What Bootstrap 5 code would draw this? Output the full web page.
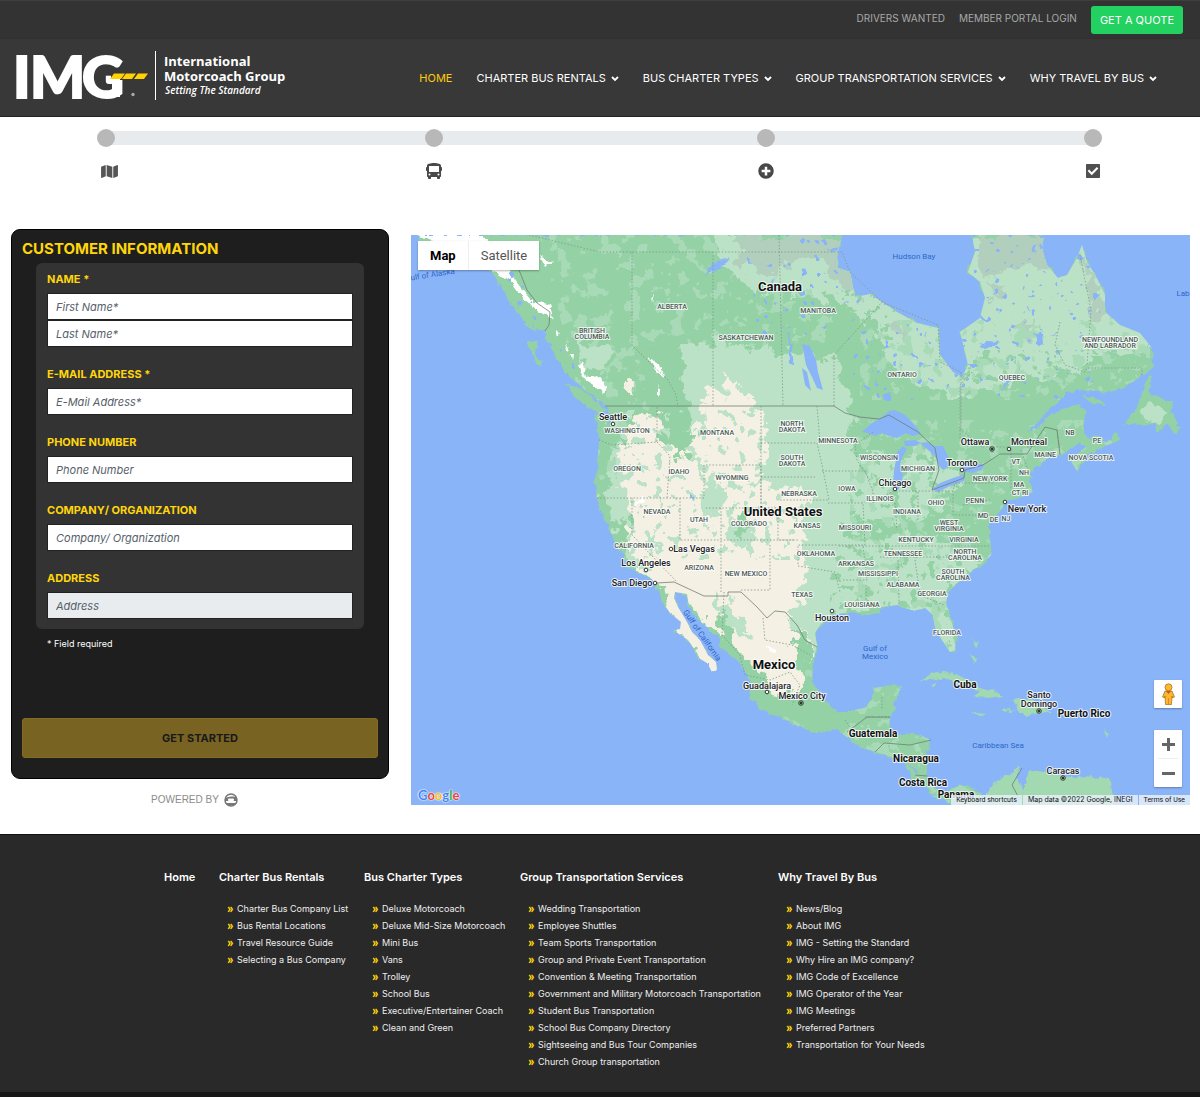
<!DOCTYPE html>
<html lang="en">
<head>
<meta charset="utf-8">
<meta name="viewport" content="width=device-width, initial-scale=1">
<title>International Motorcoach Group – Get a Quote</title>
<link href="https://cdn.jsdelivr.net/npm/bootstrap@5.3.0/dist/css/bootstrap.min.css" rel="stylesheet">
<style>
body{font-family:Inter,"Liberation Sans",sans-serif;font-size:12px;color:#222;background:#fff}
a{text-decoration:none}
.topbar{background:#333;height:38px;padding:0 17px 2px;gap:14px;font-size:10px;border-top:1px solid #3e3e3e}
.topbar a{color:#a9a9a9}
.topbar .btn-quote{background:#22d160;color:#fff;font-size:11px;line-height:16px;padding:6px 9px;border:0;border-radius:3px;margin-top:2px}
.mainbar{background:#383838;height:79px;padding:2px 43px 0 12px;border-top:1px solid #303030;border-bottom:1px solid #242424}
.mainbar .brand svg{display:block}
.menu{gap:24px;font-size:11px}
.menu a{color:#fff}
.menu a.active{color:#ffcb08}
.menu svg{margin-left:5px}
.steps{display:grid;grid-template-columns:18px 310fr 18px 315fr 18px 309fr 18px;padding:12px 98px 0 97px;align-items:center;row-gap:16px}
.steps .dot{width:18px;height:18px;border-radius:50%;background:#b8b8b8;z-index:1}
.steps .seg{height:14px;background:#e7ebee;margin:0 -3px}
.steps svg{display:block}
.workarea{padding:50px 10px 0 11px;gap:22px}
.formcol{flex:0 0 378px}
.quote{background:#1e1e1e;border:1px solid #000;border-radius:9px;padding:10px}
.quote h1{font-size:15px;line-height:18px;font-weight:700;color:#ffd60a;margin:0}
.panel{background:#333;border-radius:6px;margin:5px 14px 0;padding:9px 11px 10px}
.panel label{display:block;color:#ffd60a;font-weight:700;font-size:11px;line-height:14px;margin-bottom:7px}
.panel .form-control{font-size:11px;line-height:16px;height:27px;padding:4px 8px;border:1px solid #222;border-radius:0;font-style:italic;background:#fff}
.panel .form-control::placeholder{color:#56606a;opacity:1}
.panel .form-control:disabled{background:#e8ecef}
.panel .group + .group{margin-top:20px}
.required{color:#fff;font-size:9px;line-height:14px;margin:8px 25px 67px}
.btn-start{background:#786323;border:1px solid #846c20;border-radius:3px;color:#191919;font-weight:700;font-size:11px;line-height:18px;padding:10px;margin-bottom:10px;width:100%}
.btn-start:hover{background:#846c20;color:#111}
.powered{color:#8b8b8b;font-size:10px;line-height:16px;font-family:"Liberation Sans",sans-serif;margin-top:13px;gap:5px;padding-right:11px}
.mapbox{position:relative;margin-top:6px;align-self:flex-start;flex:1 1 0;min-width:0;font-family:Roboto,sans-serif}
.mapbox > svg{display:block;width:100%;height:auto}
.maptype{position:absolute;left:7px;top:6px;background:#fff;box-shadow:0 1px 2px rgba(0,0,0,.3);font-size:13px}
.maptype button{background:none;border:0;color:#555;padding:0 12px;height:29px}
.maptype button.on{color:#000;font-weight:700;border-right:1px solid #eee}
.mapctl{position:absolute;right:8px;bottom:18px;gap:22px}
.mapctl .tile{background:#fff;width:28px;border-radius:1px;box-shadow:0 1px 2px rgba(0,0,0,.3)}
.mapctl button{display:flex;align-items:center;justify-content:center;width:28px;height:28px;border:0;background:none;padding:0}
.mapctl hr{margin:0 4px;border-color:#bbb;height:0}
.credits{position:absolute;right:0;bottom:0;font-size:7px;line-height:10px;gap:1px}
.credits > *{background:rgba(230,238,248,.85);color:#111;padding:0 5px}
.credits span{font-family:Inter,sans-serif}
.googlemark{position:absolute;left:7px;bottom:0;font-size:13px;line-height:20px;font-family:Lato,sans-serif;font-weight:700;text-shadow:0 0 1px #fff,0 0 1px #fff,0 0 2px #fff}
.st{font-size:7px;font-weight:500;fill:#4c5a55}
.ct{font-size:9px;font-weight:500;fill:#202124}
.co{font-size:10px;font-weight:700;fill:#111}
.big{font-size:13px;font-weight:700;fill:#111}
.st,.ct,.co,.big{paint-order:stroke;stroke:#fff;stroke-opacity:.8;stroke-width:2px;stroke-linejoin:round;text-anchor:middle}
.sea{font-size:8px;fill:#2c67c9;text-anchor:middle}
.footer{background:#292929;margin-top:26px;border-top:1px solid #111;border-bottom:5px solid #161616;padding:34px 164px 22px;color:#fff}
.footer h2{font-size:11px;line-height:17px;font-weight:600;margin:0 0 14px}
.footer ul{list-style:none;margin:0;padding:0 0 0 8px;font-size:9px;line-height:17px;white-space:nowrap}
.footer li{display:flex;align-items:center;gap:3px;height:17px}
.footer li::before{content:"»";color:#ffd60a;font-family:Lato,sans-serif;font-weight:900;font-size:14px;line-height:14px;width:7px;padding-bottom:2px}
.footer a{color:#eee}
.f1{flex:0 0 55px}.f2{flex:0 0 145px}.f3{flex:0 0 156px}.f4{flex:0 0 258px}
</style>
<script src="https://cdn.jsdelivr.net/npm/bootstrap@5.3.0/dist/js/bootstrap.bundle.min.js"></script>
</head>
<body>
<header>
  <div class="topbar d-flex justify-content-end align-items-center">
    <a href="#">DRIVERS WANTED</a><a href="#">MEMBER PORTAL LOGIN</a>
    <a class="btn btn-quote" href="#">GET A QUOTE</a>
  </div>
  <nav class="mainbar d-flex justify-content-between align-items-center" aria-label="Main">
    <a class="brand" href="#" aria-label="IMG home">
      <svg width="280" height="74" viewBox="12 42 280 74" fill="#fff">
        <text y="98" font-family="Lato" font-weight="900" font-size="58" stroke="#fff" stroke-width="2"><tspan x="13">I</tspan><tspan x="30">M</tspan><tspan x="82">G</tspan></text>
        <path d="M111 72h39l-5 8h-25v-1h-9z" fill="#383838"/>
        <path d="M112 79h8v18h-8z"/>
        <path d="M114 73.500h11l-4 5.500h-11zM126 73.500h10l-4 5.500h-10zM138 73.500h10l-4 5.500h-10z" fill="#ffd200"/>
        <circle cx="133" cy="94.500" r="1.700" fill="#aaa"/><path d="M155 51h1v49h-1z"/>
        <g font-family="Open Sans" font-weight="700"><text x="164" y="66" font-size="13">International</text><text x="164" y="81" font-size="13">Motorcoach Group</text><text x="165" y="94" font-size="10" font-weight="600" font-style="italic">Setting The Standard</text></g>
      </svg>
    </a>
    <div class="menu d-flex">
      <a class="active" href="#">HOME</a>
      <a href="#">CHARTER BUS RENTALS<svg width="8" height="6" viewBox="0 0 8 6"><path d="M1 1l3 3 3-3" fill="none" stroke="#fff" stroke-width="1.800"/></svg></a>
      <a href="#">BUS CHARTER TYPES<svg width="8" height="6" viewBox="0 0 8 6"><path d="M1 1l3 3 3-3" fill="none" stroke="#fff" stroke-width="1.800"/></svg></a>
      <a href="#">GROUP TRANSPORTATION SERVICES<svg width="8" height="6" viewBox="0 0 8 6"><path d="M1 1l3 3 3-3" fill="none" stroke="#fff" stroke-width="1.800"/></svg></a>
      <a href="#">WHY TRAVEL BY BUS<svg width="8" height="6" viewBox="0 0 8 6"><path d="M1 1l3 3 3-3" fill="none" stroke="#fff" stroke-width="1.800"/></svg></a>
    </div>
  </nav>
</header>
<main>
  <div class="steps">
    <span class="dot"></span><span class="seg"></span><span class="dot"></span><span class="seg"></span><span class="dot"></span><span class="seg"></span><span class="dot"></span>
    <svg class="ms-1" width="17" height="15" viewBox="0 0 576 512" fill="#555"><path d="M0 118v346c0 11 11 19 22 15l138-63V32L20 88C8 93 0 105 0 118zm192 298 192 64V96L192 32zM554 33 416 96v384l140-56c12-5 20-17 20-30V48c0-11-11-19-22-15z"/></svg>
    <span></span>
    <svg width="18" height="16" viewBox="-32 0 576 512" fill="#484848"><path fill-rule="evenodd" d="M488 128h-8V80c0-45-100-80-224-80S32 35 32 80v48h-8c-13 0-24 11-24 24v80c0 13 11 24 24 24h8v160c0 18 14 32 32 32v32c0 18 14 32 32 32h32c18 0 32-14 32-32v-32h192v32c0 18 14 32 32 32h32c18 0 32-14 32-32v-32c18 0 32-14 32-32V256h8c13 0 24-11 24-24v-80c0-13-11-24-24-24zM96 96h320v192H96zm16 304a32 32 0 1 1 0-64 32 32 0 0 1 0 64zm288 0a32 32 0 1 1 0-64 32 32 0 0 1 0 64z"/></svg>
    <span></span>
    <svg width="18" height="16" viewBox="-32 0 576 512" fill="#484848"><path fill-rule="evenodd" d="M256 8a248 248 0 1 0 0 496 248 248 0 0 0 0-496zm-40 108h80v100h100v80H296v100h-80V296H116v-80h100z"/></svg>
    <span></span>
    <svg width="18" height="16" viewBox="-64 0 576 512" fill="#505050"><path fill-rule="evenodd" d="M32 32h384c18 0 32 14 32 32v384c0 18-14 32-32 32H32c-18 0-32-14-32-32V64c0-18 14-32 32-32zM184 389 396 177l-48-48-164 164-84-84-48 48z"/></svg>
  </div>
  <div class="workarea d-flex">
    <section class="formcol">
      <form class="quote">
        <h1>CUSTOMER INFORMATION</h1>
        <div class="panel">
          <div class="group"><label for="fn">NAME *</label><input id="fn" class="form-control" placeholder="First Name*"><input id="ln" aria-label="Last name" class="form-control" placeholder="Last Name*"></div>
          <div class="group"><label for="em">E-MAIL ADDRESS *</label><input id="em" type="email" class="form-control" placeholder="E-Mail Address*"></div>
          <div class="group"><label for="ph">PHONE NUMBER</label><input id="ph" type="tel" class="form-control" placeholder="Phone Number"></div>
          <div class="group"><label for="og">COMPANY/ ORGANIZATION</label><input id="og" class="form-control" placeholder="Company/ Organization"></div>
          <div class="group"><label for="ad">ADDRESS</label><input id="ad" class="form-control" placeholder="Address" disabled></div>
        </div>
        <p class="required">* Field required</p>
        <button class="btn btn-start" type="button">GET STARTED</button>
      </form>
      <div class="powered d-flex justify-content-center align-items-center">POWERED BY
        <svg width="14" height="14" viewBox="0 0 14 14"><circle cx="7" cy="7" r="6" fill="none" stroke="#777" stroke-width="1.500"/><path d="M1 6c3-3 9-3 12-1v3H1z" fill="#777"/><rect x="4" y="5.500" width="6" height="2.500" rx="1" fill="#fff"/><path d="M2 10h10l-2 2.500H4z" fill="#777"/></svg>
      </div>
    </section>
    <section class="mapbox">
      <svg viewBox="411 235 779 570" role="img" aria-label="Map of North America">
        <defs>
          <filter id="rough" x="-5%" y="-5%" width="110%" height="110%"><feTurbulence type="fractalNoise" baseFrequency=".14" numOctaves="3" seed="4" result="n"/><feDisplacementMap in="SourceGraphic" in2="n" scale="7" xChannelSelector="R" yChannelSelector="G"/></filter>
          <filter id="ragged" x="-10%" y="-10%" width="120%" height="120%"><feTurbulence type="fractalNoise" baseFrequency=".07" numOctaves="4" seed="9" result="n"/><feDisplacementMap in="SourceGraphic" in2="n" scale="30" xChannelSelector="R" yChannelSelector="G"/></filter>
          <filter id="mottle" x="0" y="0" width="100%" height="100%"><feTurbulence type="fractalNoise" baseFrequency=".07" numOctaves="4" seed="12"/><feColorMatrix values="0 0 0 0 0 0 0 0 0 0 0 0 0 0 0 30 0 0 0 -17.500" result="m"/><feComposite in="SourceGraphic" in2="m" operator="in"/></filter>
          <filter id="specks" x="0" y="0" width="100%" height="100%"><feTurbulence type="fractalNoise" baseFrequency=".11" numOctaves="3" seed="31"/><feColorMatrix values="0 0 0 0 0 0 0 0 0 0 0 0 0 0 0 0 30 0 0 -18.500" result="m"/><feComposite in="SourceGraphic" in2="m" operator="in"/></filter>
          <filter id="ponds" x="0" y="0" width="100%" height="100%"><feTurbulence type="fractalNoise" baseFrequency=".13" numOctaves="2" seed="77"/><feColorMatrix values="0 0 0 0 0 0 0 0 0 0 0 0 0 0 0 0 0 30 0 -21" result="m"/><feComposite in="SourceGraphic" in2="m" operator="in"/></filter>
          <path id="land" d="M416 235L425 247 445 250 470 262 488 270 493 276 503 290 508 300 515 308 522 320 532 328 545 333 549 345 558 362 567 375 580 385 590 395 602 403 608 412 603 418 594 413 598 430 599 440 598 460 595 480 597 500 601 512 610 530 615 543 622 555 628 567 640 573 652 579 657 590 664 604 670 613 681 622 680 629 673 630 682 636 688 640 695 650 697 657 707 663 712 672 717 670 716 662 708 655 700 640 692 632 687 622 678 607 674 598 675 592 687 594 689 607 695 617 707 627 718 637 720 648 730 653 740 663 748 675 751 683 749 697 755 703 767 713 780 717 800 727 817 732 837 730 847 737 858 747 877 752 892 757 900 760 907 767 910 773 913 780 927 787 932 797 942 798 950 805H985L983 795 973 788 960 785 947 791 937 788 930 783 927 777 927 767 928 753 931 740 920 735 910 733 897 735 889 728 890 717 895 707 895 697 902 687 893 685 875 688 871 700 867 707 847 712 837 712 825 702 817 690 812 680 813 663 817 645 815 633 820 625 832 615 850 612 867 615 878 613 880 607 897 605 913 611 925 608 933 615 935 627 942 640 950 652 955 650 956 637 950 617 946 603 948 592 960 580 973 570 987 562 992 553 990 540 988 527 997 515 1005 503 1017 498 1033 492 1030 482 1033 468 1047 460 1063 453 1079 443 1087 446 1070 460 1077 471 1087 455 1103 447 1120 440 1115 432 1107 442 1094 442 1083 432 1083 425 1087 412 1080 405 1067 407 1050 415 1033 428 1047 412 1067 393 1083 390 1110 392 1123 388 1143 375 1153 368 1152 348 1140 333 1120 325 1105 312 1105 295 1097 278 1087 262 1082 245 1077 258 1067 275 1058 278 1047 265 1042 248 1043 235H972L975 252 968 272 980 282 985 298 980 318 960 332 965 352 968 365 962 377 953 372 940 355 938 328 917 323 897 312 882 302 870 294 855 297 850 272 838 268 837 255 842 235Z"/>
          <clipPath id="onland"><use href="#land"/></clipPath>
        </defs>
        <rect x="411" y="235" width="779" height="570" fill="#8ab4f8"/>
        <use href="#land" fill="#94d2a5" filter="url(#rough)"/>
        <g clip-path="url(#onland)">
          <g fill="#a9dab7" filter="url(#mottle)"><path d="M540 235H835V345H640L660 480H600Z"/></g>
          <g fill="#bbe2c6" filter="url(#ragged)">
            <path d="M715 235H1130L1160 350 1090 355 1080 370 1010 380 985 392 965 400 920 385 890 365 870 325 835 300 800 295 760 290 722 262Z"/>
            <path d="M678 352L700 342 740 345 780 350 836 356 850 410 855 500 845 560 850 620 825 665 790 645 720 520 690 420Z"/>
            <path d="M840 460L925 450 965 475 945 510 860 530Z M830 540L925 535 990 560 940 610 850 610Z M740 600L765 650 735 650 705 590Z M620 440H640L655 500 610 530 605 500Z M580 345L605 350 612 368 585 370ZM925 605H955V655H940Z"/>
          </g>
          <g fill="#b2cfbd" filter="url(#ragged)"><path d="M735 235H855L862 300 840 285 815 260 790 262 770 275 740 265Z M975 235H1045L1052 272 1030 262 1010 268 980 280Z M1082 245L1110 320 1096 325 1088 290Z M1010 325L1035 320 1030 345ZM890 322L905 330 912 350 900 340ZM990 283L1005 290 995 302Z"/></g>
          <g fill="#a9dab7" filter="url(#mottle)"><path d="M850 420H1120V680H850ZM780 660H1000V805H780ZM720 290H840V345H720ZM860 320H1150V400H860Z"/></g>
          <g fill="#94d2a5" filter="url(#specks)"><path d="M720 290H900V340H720ZM960 350H1150V400H960Z M870 420H1120V780H830V560Z"/></g>
          <g fill="#f5f0e4" filter="url(#ragged)">
            <path d="M632 412L658 415 664 445 690 458 697 430 705 405 716 405 738 385 757 405 765 430 762 470 748 486 795 485 812 498 800 520 808 560 800 600 786 615 815 650 802 690 775 700 738 640 730 600 702 622 672 590 640 575 622 530 640 520 620 485 622 455Z"/>
            <path d="M660 583L676 585 683 610 722 668 708 674 670 610Z M698 397L712 390 730 402 712 407ZM722 375L732 378 738 390 724 394Z M618 378L638 382 630 398Z M688 592L730 600 748 650 720 640Z"/>
          </g>
          <g fill="#bbe2c6" filter="url(#ragged)"><path d="M703 500L713 470 722 500 708 530ZM725 520L752 520 757 535 738 555ZM650 530L660 545 655 560ZM710 590L735 605 750 640 730 630ZM690 455L705 462 700 475ZM775 505L800 508 790 518ZM614 540L628 548 648 570 635 570Z"/></g>
          <g fill="#bbe2c6" filter="url(#specks)"><path d="M610 410H800V560H610Z"/></g>
          <g fill="#94d2a5" filter="url(#ragged)"><path d="M664 408L680 418 690 450 680 462 672 440ZM737 510L750 515 745 540ZM722 605L735 640 750 670 762 700 745 690 720 650ZM790 620L812 650 806 690 798 660ZM760 700L812 690 840 712 838 730 790 722Z"/></g>
          <g fill="#fff" filter="url(#rough)"><path d="M411 235H482L500 255 515 280 530 300 550 305 555 320 535 310 518 292 510 280 490 270 470 250ZM579 365L583 363 587 377 598 375 606 386 603 393 595 386 585 380ZM648 358L653 361 660 365 661 370 666 374 662 378 655 370ZM555 330L560 333 557 337ZM566 342L569 350 567 352ZM570 354L574 354 573 360ZM658 385L661 392 658 397ZM540 255L552 262 546 268ZM652 297 655 294 653 302ZM633 505L643 495 644 500 636 506ZM765 644L777 650 772 653Z"/></g>
          <g fill="#8ab4f8" filter="url(#ponds)"><path d="M740 235H1100V400H850V340H760ZM488 270L520 270 600 400 560 380Z"/></g>
        </g>
        <g fill="#94d2a5" filter="url(#rough)">
          <path d="M526 340L537 341 535 353 542 366 536 363ZM564 383L580 388 596 402 607 412 597 412 580 402ZM500 280L512 288 519 305 510 300ZM520 310L532 320 536 332 525 325Z"/>
          <path d="M1148 376L1154 375 1148 392 1160 398 1172 403 1171 412 1179 428 1174 434 1168 424 1157 432 1154 423 1125 424 1138 404ZM1083 396L1097 398 1105 405 1092 404ZM1090 437L1100 436 1104 441 1096 441Z"/>
          <path fill="#bbe2c6" d="M1140 410L1150 402 1168 412 1160 424 1145 420Z"/>
          <path fill="#a3d9b1" d="M920 682L930 673 945 671 962 677 978 686 993 691 1004 697 988 699 975 696 980 691 958 683 940 678ZM1012 700L1022 698 1033 700 1052 712 1038 713 1026 717 1018 710 1003 712 1004 709 1018 710ZM971 711L987 714 979 717ZM1058 711H1070L1068 716 1058 714ZM930 683L936 683 935 686ZM968 639L980 643 977 647 973 641ZM1104 728L1108 735 1107 738ZM1110 742L1112 751ZM970 653L976 660 974 665Z"/>
          <path fill="#a3d9b1" d="M950 805L985 797 995 782 1015 770 1022 767 1015 776 1019 786 1030 770 1050 773 1070 777 1110 778 1112 785 1115 805Z"/>
        </g>
        <g fill="#8ab4f8">
          <path d="M862 432L872 423 881 418 889 411 895 410 905 415 912 422 918 429 921 434 912 436 906 433 897 438 889 436 882 433 875 436 868 433Z"/>
          <path d="M897 452L903 446 907 449 903 456 900 464 903 474 902 484 898 490 893 486 894 470 896 460Z"/>
          <path d="M920 443L927 442 934 446 943 446 948 456 950 466 943 470 939 466 935 456 928 450ZM904 441L915 440 921 443 914 446 905 446Z"/>
          <path d="M932 489L940 483 953 478 965 474 964 481 950 486 938 492ZM960 471L966 464 984 464 982 470 972 473Z"/>
          <path d="M802 344L810 346 816 360 818 372 823 390 817 388 812 377 806 365ZM802 368L807 372 811 391 805 385Z"/>
        </g>
        <g fill="#8ab4f8" filter="url(#rough)">
          <path d="M1027 432L1038 424 1048 412 1042 426ZM731 258L716 270 705 275 712 264 722 260ZM776 275L770 290 772 282ZM787 330L792 350 794 366 789 362ZM884 393H890V401H885ZM1035 333H1043L1044 343 1037 345ZM690 492L695 495 694 502ZM978 345L988 341 1000 342 994 347 982 348Z"/>
          <path d="M1023 771L1027 783 1024 791 1021 784ZM908 764L920 772 917 773ZM605 402L612 418 608 422ZM875 378L879 386 876 385ZM1000 392L1006 380 1009 382ZM1038 244L1030 250 1033 252Z"/>
        </g>
        <g fill="none" stroke="#7d9588" stroke-width=".8" stroke-dasharray="1.500 1.800">
          <path d="M529 235L600 252H842L850 272 882 302 938 325 940 362 961 372V430L982 447 1009 447M632 252V345L645 358 668 380 676 395 678 407M713 252V406M779 235L783 406M834 406V355L883 301M599 440L612 445 657 442V406M657 442L670 456 667 498M597 498H704V465H761V508H704M632 498V535L677 582M680 498V540H798M721 508V592M770 545V590H741M761 406V508H778V540H795M761 443H817L822 465 829 500H778M761 477H815M817 406L820 443M828 503H863L865 545H798V566L835 572 840 592M839 546L868 546H990M843 580H867L863 545M822 471H865L873 492V503L893 491H953L955 483H995M873 432L855 445 857 460 870 480M918 492V520M895 503L897 530M880 557H955M898 560L899 603M915 560 920 595 944 605M866 585V600L878 605M953 491V515H990M963 505L990 500M1011 450V490M1021 450 1030 475M1027 447 1045 445M1057 430L1060 450M972 372L960 385V440L968 447M1060 322L1055 345 1065 365 1085 372 1087 368H1142V375M1080 255L1091 310 1087 365"/>
          <path d="M724 592L722 635 740 655 745 675 770 680 790 672 800 685 792 705M763 618L765 640 792 645 810 655M865 717H890M845 720 855 735M882 697V710"/>
        </g>
        <g fill="none" stroke="#6f7f77" stroke-width=".8"><path d="M605 406H834L845 413 860 417 879 419 889 415 918 432 935 448 939 470 932 490 964 478 965 470 983 465 1000 454H1027L1045 427 1057 430 1060 455M657 583 674 582 704 596H728V592H741L757 607 767 618 775 611 785 612 797 625 805 640 817 647M867 717H890M847 732 867 717M875 752 884 743 910 745 931 740M915 775 927 776M519 270 527 290 537 303 550 312 549 325 545 331M1022 768 1012 785 1020 800"/></g>
        <text class="big" x="780" y="291">Canada</text><text class="big" x="783" y="516">United States</text><text class="big" x="774" y="669">Mexico</text>
        <g class="st">
          <text x="672" y="309">ALBERTA</text><text x="818" y="313">MANITOBA</text><text x="746" y="340">SASKATCHEWAN</text><text x="592" y="333">BRITISH</text><text x="592" y="339">COLUMBIA</text><text x="902" y="377">ONTARIO</text><text x="1012" y="380">QUEBEC</text><text x="1110" y="342">NEWFOUNDLAND</text><text x="1110" y="348">AND LABRADOR</text>
          <text x="627" y="433">WASHINGTON</text><text x="717" y="435">MONTANA</text><text x="792" y="426">NORTH</text><text x="792" y="432">DAKOTA</text><text x="792" y="460">SOUTH</text><text x="792" y="466">DAKOTA</text><text x="627" y="471">OREGON</text><text x="679" y="474">IDAHO</text><text x="732" y="480">WYOMING</text><text x="838" y="443">MINNESOTA</text><text x="879" y="460">WISCONSIN</text><text x="918" y="471">MICHIGAN</text><text x="799" y="496">NEBRASKA</text><text x="847" y="491">IOWA</text><text x="880" y="501">ILLINOIS</text><text x="907" y="514">INDIANA</text><text x="936" y="505">OHIO</text><text x="975" y="503">PENN</text><text x="990" y="481">NEW YORK</text><text x="1045" y="457">MAINE</text><text x="1070" y="435">NB</text><text x="1097" y="443">PE</text><text x="1091" y="460">NOVA SCOTIA</text><text x="1016" y="464">VT</text><text x="1024" y="475">NH</text><text x="1019" y="487">MA</text><text x="1020" y="495">CT RI</text><text x="983" y="518">MD</text><text x="994" y="522">DE</text><text x="1006" y="521">NJ</text>
          <text x="657" y="514">NEVADA</text><text x="699" y="522">UTAH</text><text x="749" y="526">COLORADO</text><text x="807" y="528">KANSAS</text><text x="855" y="530">MISSOURI</text><text x="949" y="525">WEST</text><text x="949" y="531">VIRGINIA</text><text x="916" y="542">KENTUCKY</text><text x="964" y="542">VIRGINIA</text><text x="634" y="548">CALIFORNIA</text><text x="816" y="556">OKLAHOMA</text><text x="903" y="556">TENNESSEE</text><text x="965" y="554">NORTH</text><text x="965" y="560">CAROLINA</text><text x="699" y="570">ARIZONA</text><text x="746" y="576">NEW MEXICO</text><text x="856" y="566">ARKANSAS</text><text x="878" y="576">MISSISSIPPI</text><text x="953" y="574">SOUTH</text><text x="953" y="580">CAROLINA</text><text x="903" y="587">ALABAMA</text><text x="932" y="596">GEORGIA</text><text x="802" y="597">TEXAS</text><text x="862" y="607">LOUISIANA</text><text x="947" y="635">FLORIDA</text>
        </g>
        <g class="ct"><text x="613" y="420">Seattle</text><text x="975" y="445">Ottawa</text><text x="1029" y="445">Montreal</text><text x="962" y="466">Toronto</text><text x="895" y="486">Chicago</text><text x="1027" y="512">New York</text><text x="694" y="552">Las Vegas</text><text x="646" y="566">Los Angeles</text><text x="632" y="586">San Diego</text><text x="832" y="621">Houston</text><text x="767" y="689">Guadalajara</text><text x="802" y="699">Mexico City</text><text x="1039" y="698">Santo</text><text x="1039" y="707">Domingo</text><text x="1063" y="774">Caracas</text></g>
        <g class="co"><text x="965" y="688">Cuba</text><text x="1084" y="717">Puerto Rico</text><text x="873" y="737">Guatemala</text><text x="916" y="762">Nicaragua</text><text x="923" y="786">Costa Rica</text><text x="956" y="798">Panama</text></g>
        <g class="sea"><text x="914" y="259">Hudson Bay</text><text x="875" y="651">Gulf of</text><text x="875" y="659">Mexico</text><text x="998" y="748">Caribbean Sea</text><text x="1183" y="296">Lab</text><text x="433" y="277" transform="rotate(-9 433 277)">ulf of Alaska</text><text x="700" y="637" transform="rotate(55 700 637)">Gulf of California</text></g>
        <g fill="#fff" stroke="#222" stroke-width=".9"><circle cx="613" cy="424" r="1.800"/><circle cx="1009" cy="449" r="1.800"/><circle cx="962" cy="470" r="1.800"/><circle cx="895" cy="489" r="1.800"/><circle cx="1005" cy="502" r="1.800"/><circle cx="671" cy="549" r="1.800"/><circle cx="646" cy="570" r="1.800"/><circle cx="655" cy="583" r="1.800"/><circle cx="832" cy="611" r="1.800"/><circle cx="767" cy="692" r="1.800"/></g>
        <g fill="#222" stroke="#222" stroke-width=".7"><circle cx="992" cy="449" r="1"/><circle cx="801" cy="703" r="1"/><circle cx="1039" cy="711" r="1"/><circle cx="1063" cy="778" r="1"/></g>
        <g fill="none" stroke="#222" stroke-width=".8"><circle cx="992" cy="449" r="2.300"/><circle cx="801" cy="703" r="2.300"/><circle cx="1039" cy="711" r="2.300"/><circle cx="1063" cy="778" r="2.300"/></g>
      </svg>
      <div class="maptype d-flex"><button class="on" type="button">Map</button><button type="button">Satellite</button></div>
      <div class="mapctl d-flex flex-column">
        <div class="tile"><button type="button" aria-label="Street View"><svg width="13" height="22" viewBox="0 0 13 22"><path d="M3 8h7l2.500 6-2 .8L10 13l-.5 8.500H3.500L3 13l-.5 1.800-2-.8z" fill="#fbb829" stroke="#9a6a28" stroke-width=".7"/><circle cx="6.500" cy="4.300" r="3.500" fill="#fbb829" stroke="#9a6a28" stroke-width=".7"/><path d="M4 8h5l-2.500 3zM6.300 15h.5v6h-.5z" fill="#d5502f"/></svg></button></div>
        <div class="tile"><button type="button" aria-label="Zoom in"><svg width="13" height="13"><path d="M5 0h3v5h5v3H8v5H5V8H0V5h5z" fill="#666"/></svg></button><hr><button type="button" aria-label="Zoom out"><svg width="13" height="3"><path d="M0 0h13v3H0z" fill="#666"/></svg></button></div>
      </div>
      <div class="googlemark"><span style="color:#4285f4">G</span><span style="color:#ea4335">o</span><span style="color:#fbbc05">o</span><span style="color:#4285f4">g</span><span style="color:#34a853">l</span><span style="color:#ea4335">e</span></div>
      <div class="credits d-flex"><a href="#">Keyboard shortcuts</a><span>Map data ©2022 Google, INEGI</span><a href="#">Terms of Use</a></div>
    </section>
  </div>
</main>
<footer class="footer d-flex">
  <div class="f1"><h2>Home</h2></div>
  <div class="f2"><h2>Charter Bus Rentals</h2><ul><li><a href="#">Charter Bus Company List</a></li><li><a href="#">Bus Rental Locations</a></li><li><a href="#">Travel Resource Guide</a></li><li><a href="#">Selecting a Bus Company</a></li></ul></div>
  <div class="f3"><h2>Bus Charter Types</h2><ul><li><a href="#">Deluxe Motorcoach</a></li><li><a href="#">Deluxe Mid-Size Motorcoach</a></li><li><a href="#">Mini Bus</a></li><li><a href="#">Vans</a></li><li><a href="#">Trolley</a></li><li><a href="#">School Bus</a></li><li><a href="#">Executive/Entertainer Coach</a></li><li><a href="#">Clean and Green</a></li></ul></div>
  <div class="f4"><h2>Group Transportation Services</h2><ul><li><a href="#">Wedding Transportation</a></li><li><a href="#">Employee Shuttles</a></li><li><a href="#">Team Sports Transportation</a></li><li><a href="#">Group and Private Event Transportation</a></li><li><a href="#">Convention &amp; Meeting Transportation</a></li><li><a href="#">Government and Military Motorcoach Transportation</a></li><li><a href="#">Student Bus Transportation</a></li><li><a href="#">School Bus Company Directory</a></li><li><a href="#">Sightseeing and Bus Tour Companies</a></li><li><a href="#">Church Group transportation</a></li></ul></div>
  <div><h2>Why Travel By Bus</h2><ul><li><a href="#">News/Blog</a></li><li><a href="#">About IMG</a></li><li><a href="#">IMG - Setting the Standard</a></li><li><a href="#">Why Hire an IMG company?</a></li><li><a href="#">IMG Code of Excellence</a></li><li><a href="#">IMG Operator of the Year</a></li><li><a href="#">IMG Meetings</a></li><li><a href="#">Preferred Partners</a></li><li><a href="#">Transportation for Your Needs</a></li></ul></div>
</footer>
</body>
</html>
